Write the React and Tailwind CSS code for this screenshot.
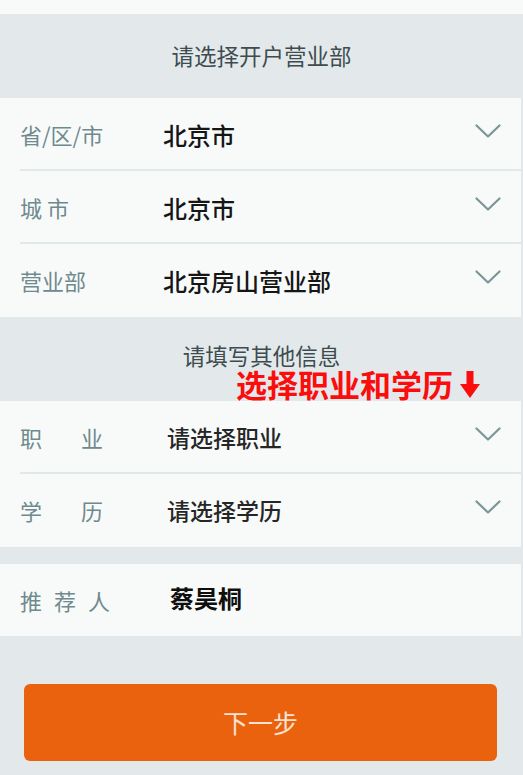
const font = { fontFamily: '"Noto Sans CJK SC", "Noto Sans", sans-serif' };

const Chevron = () => (
  <svg width="26" height="15" viewBox="0 0 26 15" fill="none" className="shrink-0 -mt-[6px]">
    <path d="M1.5 1.5 L13 12.5 L24.5 1.5" stroke="#7c9598" strokeWidth="2.2" strokeLinecap="round" strokeLinejoin="round" />
  </svg>
);

const SelectRow = ({ label, value, valueClass = 'text-[24px] text-[#161616]', divider = true }) => (
  <div className="relative flex items-center h-[73px] pl-5 pr-[20px] bg-[#f8fafa] border-r-2 border-[#e2e8e9]">
    <div className="w-[143px] text-[22px] text-[#6f8a8e] whitespace-pre">{label}</div>
    <div className={`flex-1 font-medium ${valueClass}`}>{value}</div>
    <Chevron />
    {divider && <div className="absolute left-5 right-0 bottom-0 h-[2px] bg-[#e1e8e9]" />}
  </div>
);

const SectionHead = ({ children, className = '' }) => (
  <div className={`relative flex items-center justify-center h-[84px] bg-[#e3e9ea] text-[22.5px] text-[#3e4c50] ${className}`}>
    {children}
  </div>
);

const Spread = ({ chars, gap }) => (
  <span className={`flex ${gap}`}>
    {chars.map((c) => (
      <span key={c}>{c}</span>
    ))}
  </span>
);

export default function App() {
  return (
    <div className="w-[523px] h-[775px] bg-[#e3e9ea] overflow-hidden" style={font}>
      <div className="h-[14px] bg-[#f8fafa]" />
      <SectionHead>请选择开户营业部</SectionHead>
      <SelectRow label="省/区/市" value="北京市" />
      <SelectRow label="城 市" value="北京市" />
      <SelectRow label="营业部" value="北京房山营业部" divider={false} />

      <SectionHead>
        <span className="-translate-y-[3px]">请填写其他信息</span>
        {/* annotation overlay */}
        <div className="absolute left-[236px] top-[51px] flex items-center gap-[7px]">
          <span className="text-[31px] leading-none font-bold text-[#fb0d0d]">选择职业和学历</span>
          <svg width="20" height="28" viewBox="0 0 20 28" className="mt-[2px]">
            <rect x="6.5" y="0" width="7" height="14" fill="#fb0d0d" />
            <path d="M0 13 H20 L10 27 Z" fill="#fb0d0d" />
          </svg>
        </div>
      </SectionHead>
      <SelectRow
        label={<Spread chars={['职', '业']} gap="gap-[39px]" />}
        value="请选择职业"
        valueClass="text-[23px] text-[#262626] pl-1"
      />
      <SelectRow
        label={<Spread chars={['学', '历']} gap="gap-[39px]" />}
        value="请选择学历"
        valueClass="text-[23px] text-[#262626] pl-1"
        divider={false}
      />

      <div className="h-[17px]" />
      <div className="flex items-center h-[72px] pl-5 bg-[#f8fafa] border-r-2 border-[#e2e8e9]">
        <div className="w-[150px] text-[22px] text-[#6f8a8e]">
          <Spread chars={['推', '荐', '人']} gap="gap-[12px]" />
        </div>
        <div className="text-[24px] font-bold text-[#0f0f0f] -mt-[4px]">蔡昊桐</div>
      </div>

      <div className="px-6 pt-[48px]">
        <button className="w-[473px] h-[77px] rounded-md bg-[#eb620e] text-[25px] text-[#fbe2d2]">
          下一步
        </button>
      </div>
    </div>
  );
}
